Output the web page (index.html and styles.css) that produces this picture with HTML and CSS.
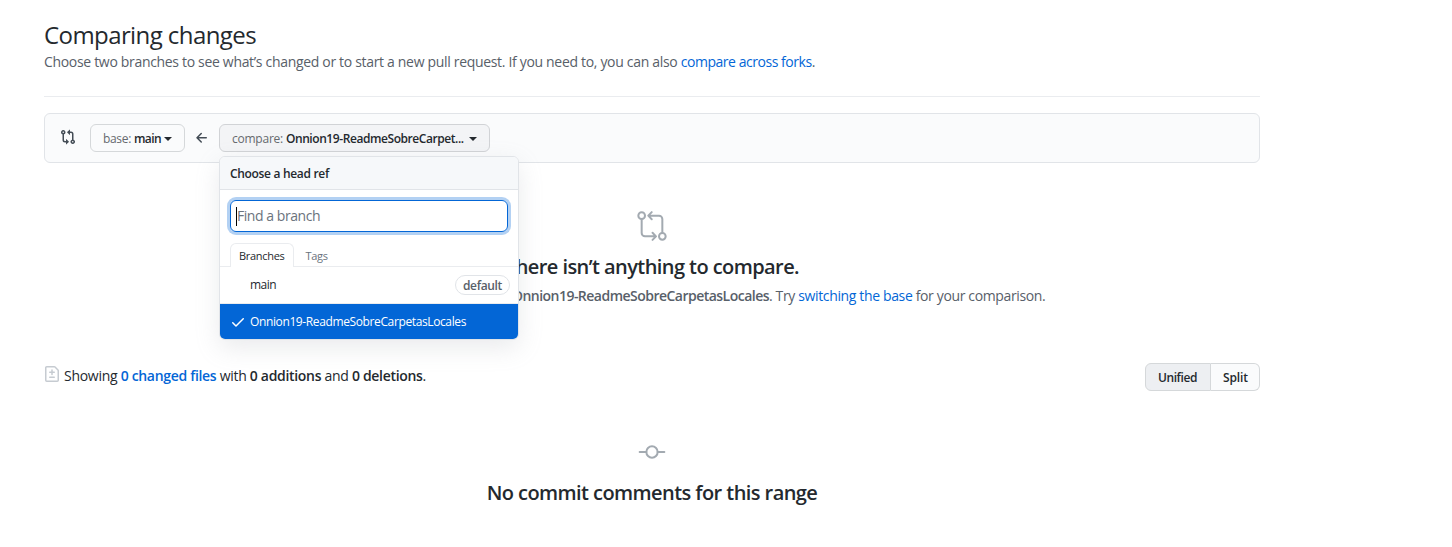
FILE: index.html
```
<!DOCTYPE html>
<html lang="en">
<head>
<meta charset="utf-8">
<title>Comparing changes</title>
<link rel="stylesheet" href="styles.css">
</head>
<body>
<main class="container">
  <header class="page-head">
    <h1 class="title">Comparing changes</h1>
    <p class="subtitle"><span class="lead">Choose two branches to see what’s changed or to start a new pull request. If you need to, you can also </span><a href="#" class="forks">compare across forks</a>.</p>
  </header>

  <section class="range">
    <svg class="range-icon" width="16" height="16" viewBox="0 0 16 16"><path fill-rule="evenodd" d="M9.573.677L7.177 3.073a.25.25 0 000 .354l2.396 2.396A.25.25 0 0010 5.646V4h1a1 1 0 011 1v5.628a2.251 2.251 0 101.5 0V5A2.5 2.5 0 0011 2.5h-1V.854a.25.25 0 00-.427-.177zM6 12v-1.646a.25.25 0 01.427-.177l2.396 2.396a.25.25 0 010 .354l-2.396 2.396A.25.25 0 016 15.146V13.5H5A2.5 2.5 0 012.5 11V5.372a2.25 2.25 0 111.5 0V11a1 1 0 001 1h1zm6.75 0a.75.75 0 100 1.5.75.75 0 000-1.5zM4 3.25a.75.75 0 11-1.5 0 .75.75 0 011.5 0z"/></svg>
    <button class="btn base"><span class="key">base:</span><span class="val">main</span><i class="caret"></i></button>
    <svg class="arrow" width="16" height="16" viewBox="0 0 16 16"><path fill-rule="evenodd" d="M7.78 12.53a.75.75 0 01-1.06 0L2.47 8.28a.75.75 0 010-1.06l4.25-4.25a.75.75 0 011.06 1.06L4.81 7h7.44a.75.75 0 010 1.5H4.81l2.97 2.97a.75.75 0 010 1.06z"/></svg>
    <div class="select">
      <button class="btn compare"><span class="key">compare:</span><span class="val">Onnion19-ReadmeSobreCarpet...</span><i class="caret"></i></button>
      <div class="menu">
        <div class="menu-head">Choose a head ref</div>
        <div class="menu-filter"><div class="field"><i class="cursor"></i><span>Find a branch</span></div></div>
        <div class="tabs"><span class="tab tab-on">Branches</span><span class="tab">Tags</span></div>
        <div class="item"><span class="item-name short">main</span><span class="label">default</span></div>
        <div class="item item-on"><svg width="16" height="16" viewBox="0 0 16 16"><path fill-rule="evenodd" d="M13.78 4.22a.75.75 0 010 1.06l-7.25 7.25a.75.75 0 01-1.06 0L2.22 9.28a.75.75 0 011.06-1.06L6 10.94l6.72-6.72a.75.75 0 011.06 0z"/></svg><span class="item-name">Onnion19-ReadmeSobreCarpetasLocales</span></div>
      </div>
    </div>
  </section>

  <section class="blank">
    <svg width="32" height="32" viewBox="0 0 24 24" fill="none" stroke="currentColor" stroke-width="1.5" stroke-linecap="round" stroke-linejoin="round"><circle cx="4.25" cy="4.25" r="2.5"/><circle cx="19.75" cy="19.75" r="2.5"/><path d="M4.25 7v10.25a2.5 2.5 0 002.5 2.5h8M12.4 17.1l2.6 2.65-2.6 2.65M19.75 17V6.75a2.5 2.5 0 00-2.5-2.5H9.5M11.8 1.6l-2.6 2.65 2.6 2.65"/></svg>
    <h2 class="heading">There isn’t anything to compare.</h2>
    <p class="detail"><b>main</b> is up to date with all commits from <b class="ref">Onnion19-ReadmeSobreCarpetasLocales</b>. Try <a href="#">switching the base</a> for your comparison.</p>
  </section>

  <section class="toc">
    <p class="stats"><svg width="16" height="16" viewBox="0 0 16 16"><path fill-rule="evenodd" d="M2.75 1.5a.25.25 0 00-.25.25v12.5c0 .138.112.25.25.25h10.5a.25.25 0 00.25-.25V4.664a.25.25 0 00-.073-.177l-2.914-2.914a.25.25 0 00-.177-.073H2.75zM1 1.75C1 .784 1.784 0 2.75 0h7.586c.464 0 .909.184 1.237.513l2.914 2.914c.329.328.513.773.513 1.237v9.586A1.75 1.75 0 0113.25 16H2.75A1.75 1.75 0 011 14.25V1.75zm7 1.5a.75.75 0 01.75.75v1.5h1.5a.75.75 0 010 1.5h-1.5v1.5a.75.75 0 01-1.5 0V7h-1.5a.75.75 0 010-1.5h1.5V4A.75.75 0 018 3.25zm-3 8a.75.75 0 01.75-.75h4.5a.75.75 0 010 1.5h-4.5a.75.75 0 01-.75-.75z"/></svg><span>Showing <a href="#"><b>0 changed files</b></a> with <b>0 additions</b> and <b>0 deletions</b>.</span></p>
    <div class="group"><button class="btn on">Unified</button><button class="btn split">Split</button></div>
  </section>

  <section class="comments">
    <svg width="32" height="32" viewBox="0 0 24 24" fill="none" stroke="currentColor" stroke-width="1.5" stroke-linecap="round"><circle cx="12" cy="12" r="4.25"/><path d="M2.75 12h5M16.25 12h5"/></svg>
    <h2 class="heading range-end">No commit comments for this range</h2>
  </section>
</main>
</body>
</html>
```
FILE: styles.css
```
* { box-sizing: border-box; }
body {
  margin: 0;
  background: #fff;
  color: #24292e;
  font: 14px/21px "Open Sans", "Noto Sans", sans-serif;
  overflow: hidden;
}
h1, h2, p { margin: 0; }
a { color: #0366d6; text-decoration: none; }
b { font-weight: 600; letter-spacing: -.3px; }
svg { display: block; fill: currentColor; flex: none; }
svg[fill="none"] { fill: none; }

.container { width: 1216px; margin-left: 44px; padding-top: 17px; }
.page-head { height: 80px; border-bottom: 1px solid #eaecef; }
.title { font-size: 24px; font-weight: 370; line-height: 36px; letter-spacing: -.58px; }
.subtitle { margin-top: -2px; color: #586069; letter-spacing: -.32px; white-space: nowrap; }
.forks { letter-spacing: -.46px; }

.range {
  display: flex;
  align-items: flex-start;
  height: 50px;
  margin-top: 16px;
  padding: 10px 15px;
  border: 1px solid #e1e4e8;
  border-radius: 6px;
  background: #fafbfc;
}
.range-icon { margin: 5px 14px 0 0; color: #444d56; }
.arrow { margin: 6px 9px 0; color: #444d56; }
.btn {
  display: flex;
  align-items: center;
  height: 28px;
  padding: 2px 12px 0;
  border: 1px solid #d5d8da;
  border-radius: 6px;
  background: #fafbfc;
  color: #24292e;
  font: 600 12px/20px "Open Sans", "Noto Sans", sans-serif;
  letter-spacing: -.43px;
  white-space: nowrap;
}
.base { width: 95px; }
.key { margin-right: 3px; color: #666a6e; font-weight: 400; letter-spacing: -.24px; }
.base .key { letter-spacing: -.33px; }
.base .val { letter-spacing: -.6px; }
.caret { border: 4px solid transparent; border-top-color: currentColor; border-bottom: 0; margin-left: 3px; }
.compare .caret { margin-left: 5px; }
.compare { width: 271px; background: #f3f4f6; border-color: #d1d3d6; }

.select { position: relative; }
.menu {
  position: absolute;
  z-index: 2;
  top: 32px;
  left: 0;
  width: 300px;
  overflow: hidden;
  border: 1px solid #e1e4e8;
  border-radius: 6px;
  background: #fff;
  box-shadow: 0 8px 24px rgba(149, 157, 165, .2);
  font-size: 12px;
}
.menu-head {
  height: 33px;
  padding: 0 10px;
  border-bottom: 1px solid #e1e4e8;
  background: #f6f8fa;
  font-weight: 600;
  line-height: 33px;
  letter-spacing: -.32px;
}
.menu-filter { padding: 10px 10px 11px; }
.field {
  display: flex;
  align-items: center;
  height: 32px;
  padding: 0 5px;
  border: 1px solid #0366d6;
  border-radius: 6px;
  box-shadow: 0 0 0 3px rgba(3, 102, 214, .3);
  color: #6a737d;
  font-size: 14px;
  letter-spacing: -.45px;
}
.field span { margin-top: -1px; }
.cursor { width: 1px; height: 19px; background: #000; }
.tabs { display: flex; height: 24px; padding: 0 10px; border-bottom: 1px solid #eaecef; }
.tab {
  height: 24px;
  padding: 0 11px;
  border: 1px solid transparent;
  border-bottom: 0;
  color: #6a737d;
  font-size: 11px;
  line-height: 24px;
  letter-spacing: -.3px;
}
.tab-on { padding: 0 8px; border-color: #eaecef; border-radius: 6px 6px 0 0; background: #fff; color: #24292e; }
.item { display: flex; align-items: center; height: 37px; padding: 0 8px 0 30px; border-bottom: 1px solid #eaecef; }
.item-name { letter-spacing: -.38px; }
.short { margin-top: -1px; letter-spacing: -.5px; }
.label {
  height: 20px;
  margin-left: auto;
  padding: 0 7px;
  border: 1px solid #e1e4e8;
  border-radius: 10px;
  color: #586069;
  font-weight: 600;
  line-height: 19px;
  letter-spacing: -.33px;
}
.item-on { height: 35px; padding: 0 10px; border: 0; background: #0366d6; color: #fff; }
.item-on svg { margin-right: 4px; }

.blank { display: flex; flex-direction: column; align-items: center; padding-top: 47px; }
.blank > svg, .comments > svg { color: #a3aab1; }
.heading { font-size: 20px; font-weight: 600; line-height: 30px; letter-spacing: -.57px; white-space: nowrap; }
.blank .heading { margin-top: 10px; }
.detail { margin-top: 3px; color: #586069; letter-spacing: -.36px; white-space: nowrap; }
.detail .ref { letter-spacing: -.52px; }

.toc { display: flex; justify-content: space-between; margin-top: 57px; }
.stats { display: flex; height: 28px; line-height: 25px; letter-spacing: -.28px; }
.stats b { letter-spacing: -.32px; }
.stats svg { margin: 3px 4px 0 0; color: #c6cbd1; }
.group { display: flex; }
.group .on { width: 66px; border-radius: 6px 0 0 6px; background: #edeff2; }
.group .split { width: 49px; padding-left: 12px; padding-right: 0; border-left: 0; border-radius: 0 6px 6px 0; letter-spacing: -.1px; }

.comments { display: flex; flex-direction: column; align-items: center; margin-top: 45px; }
.comments .heading { margin-top: 10px; }
```
